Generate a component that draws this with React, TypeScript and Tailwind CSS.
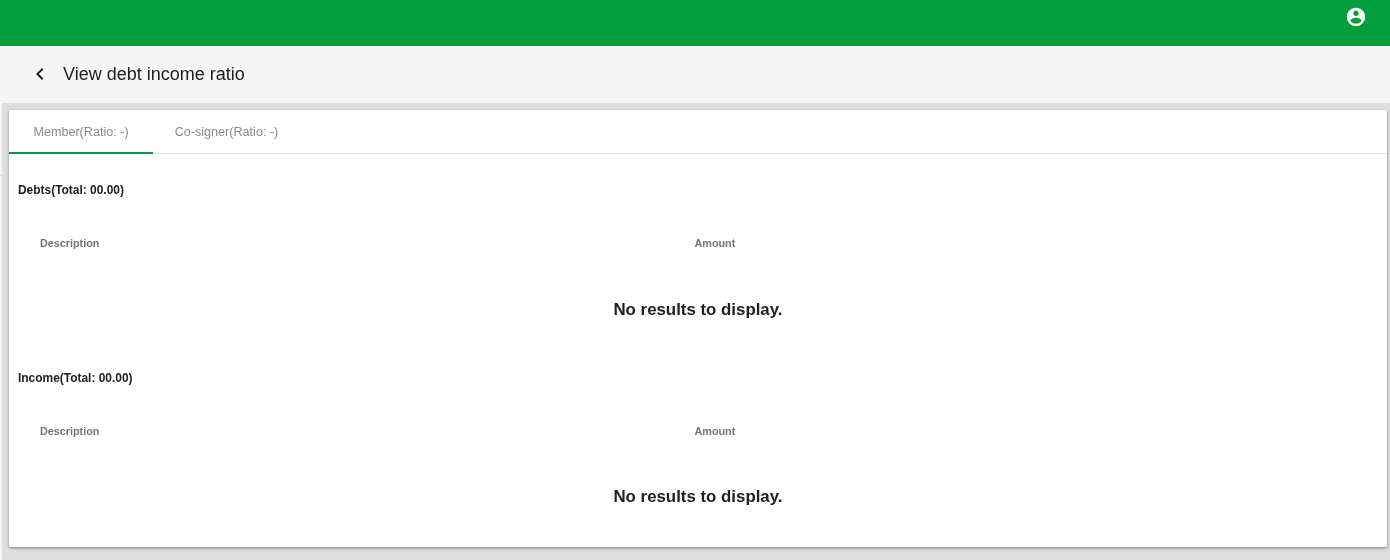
import React from 'react';

const font = "font-['Liberation_Sans',Arial,sans-serif]";

function AccountIcon() {
  return (
    <svg width="22" height="22" viewBox="0 0 24 24" fill="#ffffff">
      <path d="M12 2C6.48 2 2 6.48 2 12s4.48 10 10 10 10-4.48 10-10S17.52 2 12 2zm0 3c1.66 0 3 1.34 3 3s-1.34 3-3 3-3-1.34-3-3 1.34-3 3-3zm0 14.2c-2.5 0-4.71-1.28-6-3.22.03-1.99 4-3.08 6-3.08 1.99 0 5.97 1.09 6 3.08-1.29 1.94-3.5 3.22-6 3.22z" />
    </svg>
  );
}

function BackIcon() {
  return (
    <svg width="24" height="24" viewBox="0 0 24 24" fill="#212121">
      <path d="M15.41 7.41L14 6l-6 6 6 6 1.41-1.41L10.83 12z" />
    </svg>
  );
}

function Section({ title, emptyClass }: { title: string; emptyClass: string }) {
  return (
    <section>
      <h2 className="pl-[9px] text-[11.95px] font-bold leading-[14px] text-[#212121]">{title}</h2>
      <div className="mt-10 flex text-[10.8px] font-bold leading-[13px] text-[#757575]">
        <div className="w-[685.5px] pl-[31px]">Description</div>
        <div>Amount</div>
      </div>
      <div className={`text-center text-[16.85px] font-bold leading-5 text-[#212121] ${emptyClass}`}>No results to display.</div>
    </section>
  );
}

export default function App() {
  return (
    <div className={`flex h-[560px] flex-col overflow-hidden bg-[#f5f5f5] ${font}`}>
      <header className="flex h-[46px] shrink-0 justify-end bg-[#009f3c] pr-[23px] pt-1.5">
        <AccountIcon />
      </header>
      <div className="flex h-[57px] shrink-0 items-center pb-0.5 pl-7">
        <BackIcon />
        <h1 className="ml-[11px] text-lg font-normal text-[#212121] will-change-transform">View debt income ratio</h1>
      </div>
      <div className="flex flex-1">
        <div className="h-[73px] w-0.5 shrink-0 border-b border-[#e0e0e0]" />
        <main className="flex-1 bg-[#dedede] pb-[13px] pl-[7px] pr-[3px] pt-[7px]">
          <div className="h-[437px] rounded-[2px] bg-white shadow-[0_1px_3px_rgba(0,0,0,0.45)] will-change-transform">
            <nav className="flex h-11 border-b border-[#e0e0e0] text-[12.6px] text-[#8a8a8a]">
              <div className="flex h-11 w-36 items-center justify-center border-b-2 border-[#009f3c] pt-0.5">Member(Ratio: -)</div>
              <div className="flex h-11 w-[147px] items-center justify-center pt-px">Co-signer(Ratio: -)</div>
            </nav>
            <div className="pt-[29px]">
              <Section title="Debts(Total: 00.00)" emptyClass="mt-[50px]" />
              <div className="mt-[51px]">
                <Section title="Income(Total: 00.00)" emptyClass="mt-[49px]" />
              </div>
            </div>
          </div>
        </main>
      </div>
    </div>
  );
}
